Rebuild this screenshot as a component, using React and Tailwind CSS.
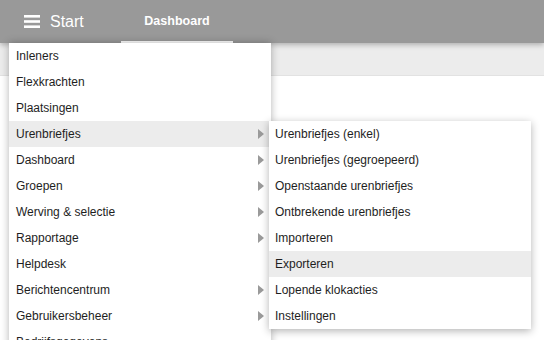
import { Fragment } from 'react';

const MAIN_ITEMS = [
  { label: 'Inleners' },
  { label: 'Flexkrachten' },
  { label: 'Plaatsingen' },
  { label: 'Urenbriefjes', sub: true, active: true },
  { label: 'Dashboard', sub: true },
  { label: 'Groepen', sub: true },
  { label: 'Werving & selectie', sub: true },
  { label: 'Rapportage', sub: true },
  { label: 'Helpdesk' },
  { label: 'Berichtencentrum', sub: true },
  { label: 'Gebruikersbeheer', sub: true },
  { label: 'Bedrijfsgegevens' },
];

const SUB_ITEMS = [
  'Urenbriefjes (enkel)',
  'Urenbriefjes (gegroepeerd)',
  'Openstaande urenbriefjes',
  'Ontbrekende urenbriefjes',
  'Importeren',
  'Exporteren',
  'Lopende klokacties',
  'Instellingen',
];

function Arrow() {
  return (
    <svg width="6" height="10" viewBox="0 0 6 10" className="shrink-0">
      <polygon points="0,0 6,5 0,10" fill="#9a9a9a" />
    </svg>
  );
}

export default function App() {
  return (
    <div className="relative w-[544px] h-[340px] overflow-hidden bg-white font-['Liberation_Sans',Arial,sans-serif]">
      {/* Top bar */}
      <header className="relative z-10 flex h-[43px] items-stretch bg-[#999999] shadow-[0_2px_5px_rgba(0,0,0,0.25)]">
        <div className="flex w-[121px] items-center gap-[10px] pl-6">
          <svg width="16" height="13" viewBox="0 0 16 13">
            <rect x="0" y="0" width="16" height="2.6" fill="#fff" />
            <rect x="0" y="5.2" width="16" height="2.6" fill="#fff" />
            <rect x="0" y="10.4" width="16" height="2.6" fill="#fff" />
          </svg>
          <span className="text-[16px] leading-none text-white">Start</span>
        </div>
        <div className="flex w-[112px] items-center justify-center border-b-2 border-white pt-[2px] text-[12.5px] font-bold text-white">
          Dashboard
        </div>
      </header>

      {/* Sub bar */}
      <div className="h-[33px] bg-[#ececec] border-b border-[#e2e2e2]" />

      {/* Main dropdown */}
      <div className="absolute left-[9px] top-[43px] z-20 w-[262px] bg-white shadow-[0_0_8px_rgba(0,0,0,0.3)]">
        {MAIN_ITEMS.map((item) => (
          <div
            key={item.label}
            className={`flex h-[26px] items-center justify-between pl-[7px] pr-[7px] text-[12px] text-[#1e1e1e] ${item.active ? 'bg-[#ececec]' : ''}`}
          >
            <span>{item.label}</span>
            {item.sub && <Arrow />}
          </div>
        ))}
      </div>

      {/* Submenu */}
      <div className="absolute left-[269px] top-[121px] z-30 w-[262px] bg-white shadow-[0_2px_8px_rgba(0,0,0,0.3)]">
        {SUB_ITEMS.map((label) => (
          <Fragment key={label}>
            <div
              className={`flex h-[26px] items-center pl-[6px] text-[12px] text-[#1e1e1e] ${label === 'Exporteren' ? 'bg-[#ececec]' : ''}`}
            >
              {label}
            </div>
          </Fragment>
        ))}
      </div>
    </div>
  );
}
